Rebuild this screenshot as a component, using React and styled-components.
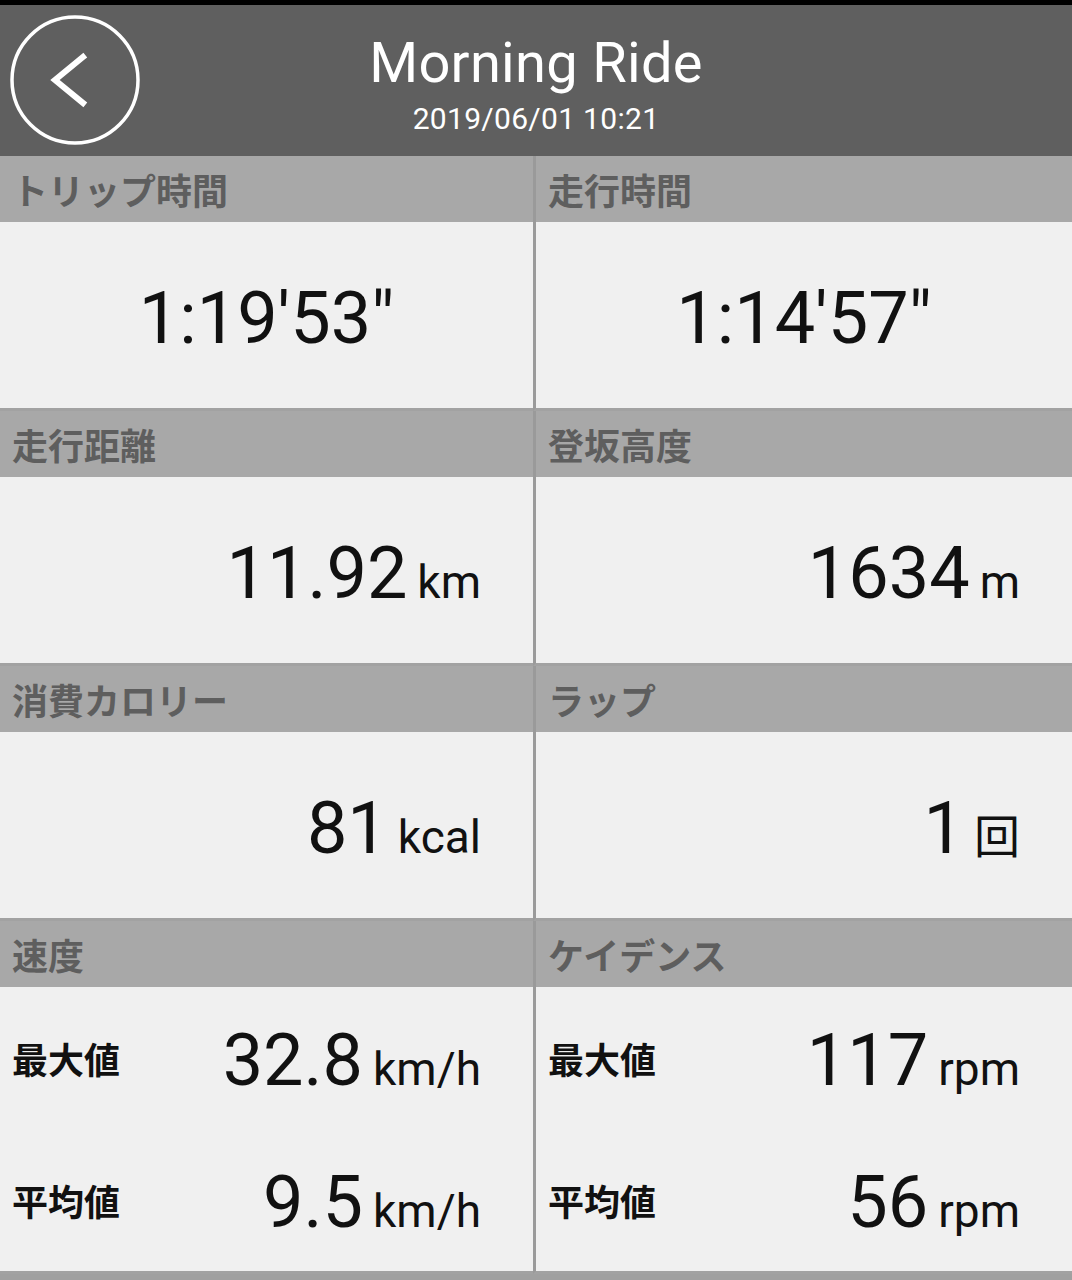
import styled, { createGlobalStyle } from "styled-components";

const GlobalStyle = createGlobalStyle`
  html, body {
    margin: 0;
    padding: 0;
    background: #a0a0a0;
  }
  body {
    font-family: Roboto, "Noto Sans CJK JP", sans-serif;
  }
`;

const sections = [
  { title: "トリップ時間", value: "1:19'53\"", centered: true },
  { title: "走行時間", value: "1:14'57\"", centered: true },
  { title: "走行距離", value: "11.92", unit: "km" },
  { title: "登坂高度", value: "1634", unit: "m" },
  { title: "消費カロリー", value: "81", unit: "kcal" },
  { title: "ラップ", value: "1", unit: "回" },
];

const stats = [
  {
    title: "速度",
    rows: [
      { label: "最大値", value: "32.8", unit: "km/h" },
      { label: "平均値", value: "9.5", unit: "km/h" },
    ],
  },
  {
    title: "ケイデンス",
    rows: [
      { label: "最大値", value: "117", unit: "rpm" },
      { label: "平均値", value: "56", unit: "rpm" },
    ],
  },
];

const BackIcon = () => (
  <svg width="134" height="134" viewBox="0 0 134 134">
    <circle cx="67" cy="67" r="63" fill="none" stroke="#fff" strokeWidth="3.5" />
    <polyline
      points="75,44 47,67 75,90"
      fill="none"
      stroke="#fff"
      strokeWidth="6"
      strokeLinecap="square"
    />
  </svg>
);

export default function App() {
  return (
    <>
      <GlobalStyle />
      <Page>
        <Header>
          <BackButton>
            <BackIcon />
          </BackButton>
          <Title>Morning Ride</Title>
          <DateText>2019/06/01 10:21</DateText>
        </Header>

        <Grid>
          {sections.map((s) => (
            <Section key={s.title}>
              <SectionHead>{s.title}</SectionHead>
              <Body centered={s.centered}>
                <Value>
                  <Number>{s.value}</Number>
                  {s.unit && <Unit>{s.unit}</Unit>}
                </Value>
              </Body>
            </Section>
          ))}
          {stats.map((s) => (
            <Section key={s.title}>
              <SectionHead>{s.title}</SectionHead>
              <StatBody>
                {s.rows.map((r) => (
                  <StatRow key={r.label}>
                    <RowLabel>{r.label}</RowLabel>
                    <Value>
                      <Number>{r.value}</Number>
                      <Unit>{r.unit}</Unit>
                    </Value>
                  </StatRow>
                ))}
              </StatBody>
            </Section>
          ))}
        </Grid>
      </Page>
    </>
  );
}

const Page = styled.div`
  width: 1072px;
  min-height: 1280px;
  background: #a0a0a0;
`;

const Header = styled.header`
  position: relative;
  height: 151px;
  border-top: 5px solid #000;
  background: #5f5f5f;
  color: #fff;
  display: flex;
  flex-direction: column;
  align-items: center;
`;

const BackButton = styled.div`
  position: absolute;
  left: 8px;
  top: 8px;
  width: 134px;
  height: 134px;
`;

const Title = styled.div`
  font-size: 56px;
  line-height: 64px;
  margin-top: 26px;
  letter-spacing: 0.3px;
`;

const DateText = styled.div`
  font-size: 30px;
  line-height: 34px;
  margin-top: 7px;
  letter-spacing: 0.3px;
`;

const Grid = styled.div`
  display: grid;
  grid-template-columns: 533px 539px;
`;

const Section = styled.section`
  display: flex;
  flex-direction: column;
  border-bottom: 3px solid #a2a2a2;
  &:nth-child(even) {
    border-left: 3px solid #9a9a9a;
  }
`;

const SectionHead = styled.div`
  height: 66px;
  background: #a8a8a8;
  color: #5e5e5e;
  font-family: "Noto Sans CJK JP", sans-serif;
  font-weight: 700;
  font-size: 36px;
  line-height: 66px;
  padding-left: 12px;
  white-space: nowrap;
`;

const Body = styled.div`
  height: 186px;
  background: #f0f0f0;
  display: flex;
  align-items: center;
  justify-content: ${(p) => (p.centered ? "center" : "flex-end")};
  padding-right: ${(p) => (p.centered ? "0" : "52px")};
  padding-top: 8px;
  box-sizing: border-box;
`;

const StatBody = styled.div`
  height: 284px;
  background: #f0f0f0;
  display: flex;
  flex-direction: column;
`;

const StatRow = styled.div`
  flex: 1;
  display: flex;
  align-items: center;
  justify-content: space-between;
  padding: 6px 52px 0 12px;
`;

const RowLabel = styled.div`
  font-family: "Noto Sans CJK JP", sans-serif;
  font-weight: 700;
  font-size: 36px;
  color: #111;
  margin-top: -6px;
`;

const Value = styled.div`
  display: flex;
  align-items: baseline;
  color: #111;
`;

const Number = styled.span`
  font-family: Roboto, sans-serif;
  font-size: 72px;
  line-height: 1;
`;

const Unit = styled.span`
  font-family: Roboto, "Noto Sans CJK JP", sans-serif;
  font-size: 46px;
  line-height: 1;
  margin-left: 10px;
`;
